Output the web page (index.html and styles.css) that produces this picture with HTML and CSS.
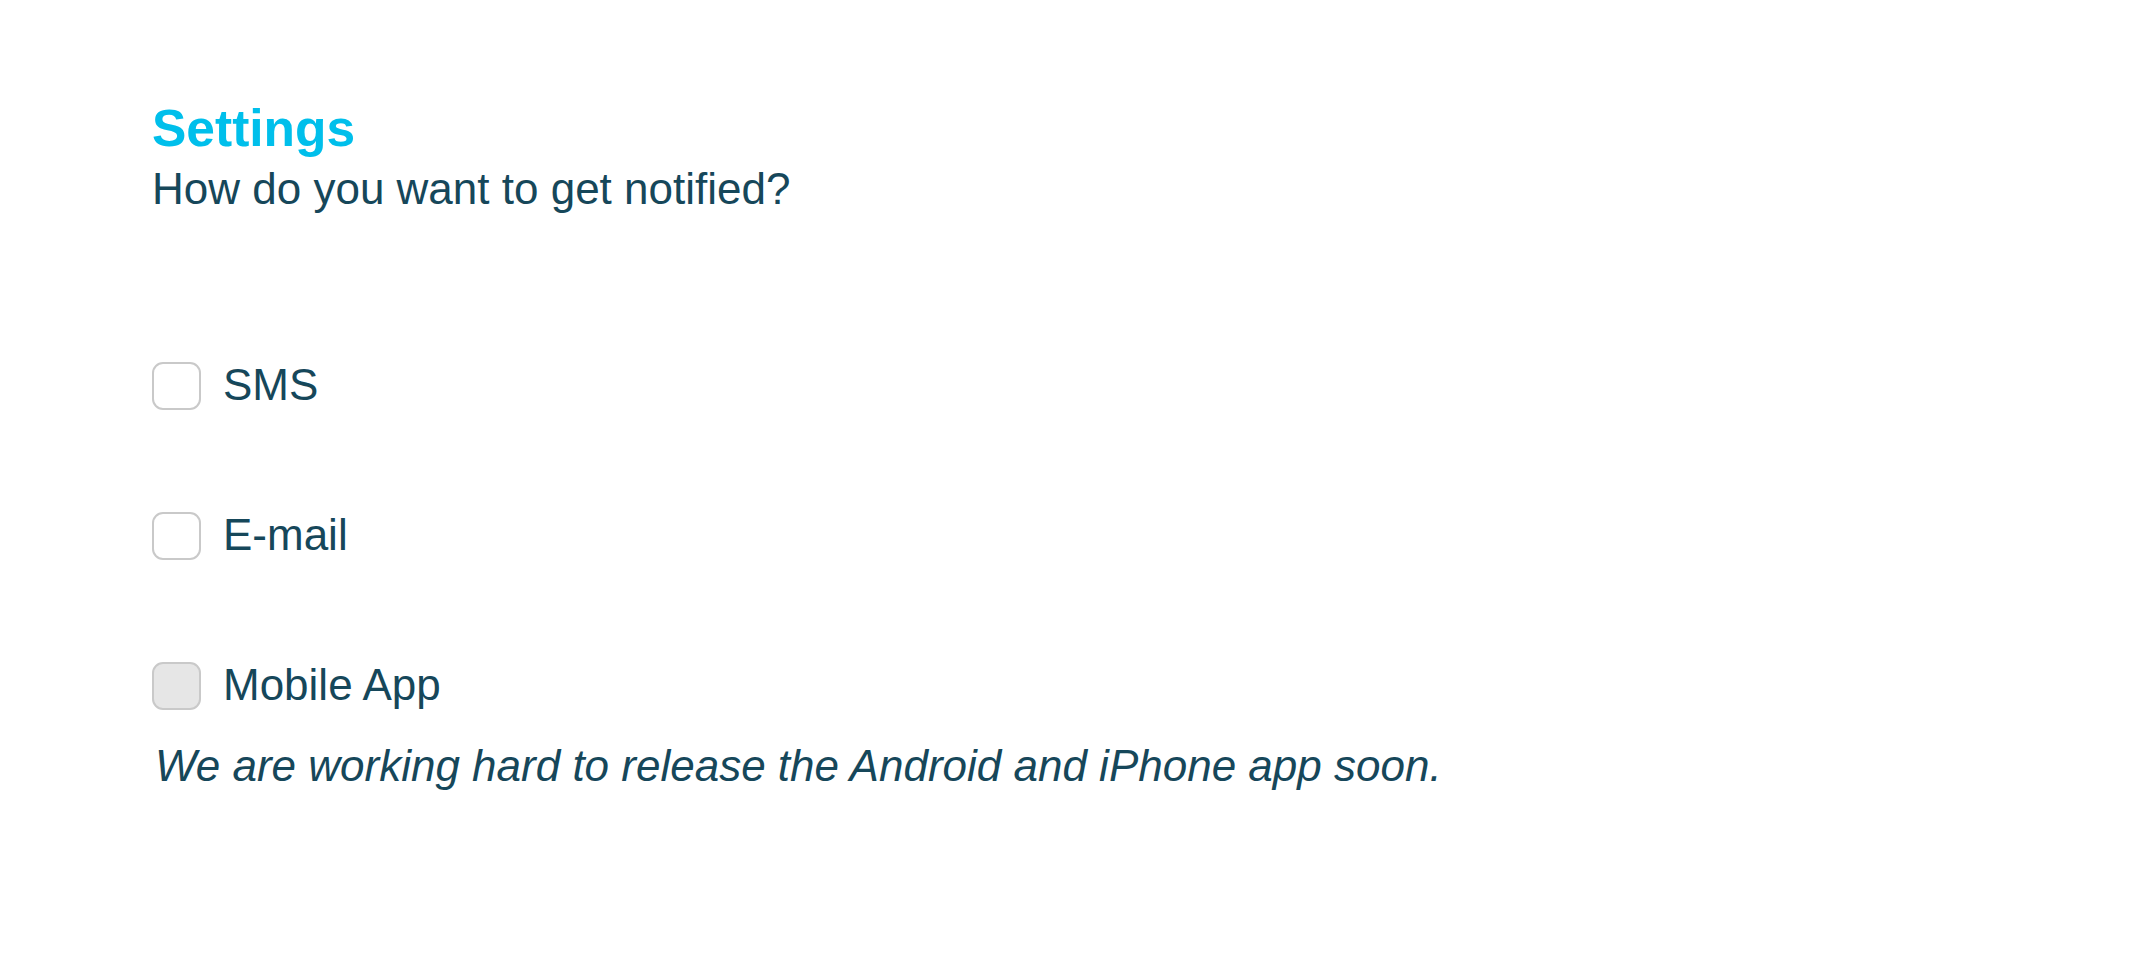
FILE: index.html
```html
<!DOCTYPE html>
<html lang="en">
<head>
<meta charset="utf-8">
<title>Settings</title>
<link rel="stylesheet" href="styles.css">
</head>
<body>
<main class="page">
  <header class="intro">
    <h1 class="title">Settings</h1>
    <p class="subtitle">How do you want to get notified?</p>
  </header>
  <div class="options">
    <label class="option">
      <input type="checkbox" class="box">
      <span class="label">SMS</span>
    </label>
    <label class="option">
      <input type="checkbox" class="box">
      <span class="label">E-mail</span>
    </label>
    <div class="option-group">
      <label class="option">
        <input type="checkbox" class="box" disabled>
        <span class="label">Mobile App</span>
      </label>
      <p class="note">We are working hard to release the Android and iPhone app soon.</p>
    </div>
  </div>
</main>
</body>
</html>
```

FILE: styles.css
```css
html, body {
  margin: 0;
  padding: 0;
  background: #ffffff;
}

body {
  font-family: "Liberation Sans", Arial, Helvetica, sans-serif;
  color: #16475a;
}

.page {
  padding: 98px 0 0 152px;
  display: flex;
  flex-direction: column;
}

.intro {
  display: flex;
  flex-direction: column;
  gap: 6px;
}

.title {
  margin: 0;
  font-size: 51.5px;
  font-weight: 700;
  line-height: normal;
  color: #00bfeb;
}

.subtitle {
  margin: 0;
  font-size: 44px;
  line-height: normal;
}

.options {
  margin-top: 148px;
  display: flex;
  flex-direction: column;
  gap: 102px;
}

.option {
  display: flex;
  align-items: center;
  gap: 22px;
  height: 48px;
}

.box {
  -webkit-appearance: none;
  appearance: none;
  margin: 0;
  box-sizing: border-box;
  width: 49px;
  height: 48px;
  border: 2px solid #c9c9c9;
  border-radius: 11px;
  background: #ffffff;
  flex: none;
}

.box:disabled {
  background: #e6e6e6;
}

.label {
  font-size: 44px;
  line-height: normal;
  padding-bottom: 2px;
}

.option-group {
  display: flex;
  flex-direction: column;
  gap: 31px;
}

.note {
  margin: 0;
  font-size: 44px;
  font-style: italic;
  line-height: normal;
  padding-left: 3px;
}
```
